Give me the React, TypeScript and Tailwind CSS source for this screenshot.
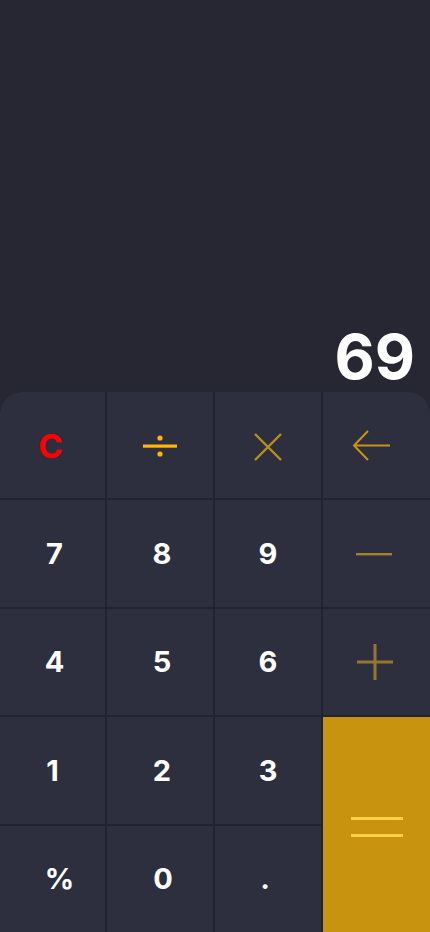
import React from "react";

const Cell = ({ children, className = "" }: { children?: React.ReactNode; className?: string }) => (
  <div className={`flex items-center justify-center bg-[#2e2f3e] ${className}`}>{children}</div>
);

const Digit = ({ d, className = "" }: { d: string; className?: string }) => (
  <Cell className={className}>
    <span className="text-[29px] font-bold text-white">{d}</span>
  </Cell>
);

export default function App() {
  return (
    <div
      className="flex h-[932px] w-[430px] flex-col bg-[#272734]"
      style={{ fontFamily: "Inter, 'Liberation Sans', sans-serif" }}
    >
      <div className="flex flex-1 items-end justify-end px-[15px] pb-[4px]">
        <span className="text-[62px] font-bold leading-none text-white">69</span>
      </div>
      <div className="grid h-[540px] grid-cols-[105px_106px_106px_1fr] grid-rows-5 gap-[2px] overflow-hidden rounded-t-[22px] bg-[#232330]">
        <Cell className="pr-[4px] pt-[4px]">
          <span className="text-[33px] font-bold text-[#ff0000]">C</span>
        </Cell>
        <Cell className="pt-[2px]">
          <svg width="36" height="30" viewBox="0 0 36 30">
            <circle cx="18" cy="7" r="2.6" fill="#ffb60a" />
            <rect x="1" y="13.5" width="34" height="3.2" fill="#ffb60a" />
            <circle cx="18" cy="23" r="2.6" fill="#ffb60a" />
          </svg>
        </Cell>
        <Cell className="pt-[4px]">
          <svg width="30" height="30" viewBox="0 0 30 30">
            <path d="M2 2 L28 28 M28 2 L2 28" stroke="#b88f1e" strokeWidth="2.4" />
          </svg>
        </Cell>
        <Cell className="pr-[10px] pt-[2px]">
          <svg width="40" height="34" viewBox="0 0 40 34">
            <path d="M38 16.5 H2 M16 2 L2 16.5 L16 31" stroke="#c89412" strokeWidth="2" fill="none" />
          </svg>
        </Cell>
        <Digit d="7" className="pl-[4px]" />
        <Digit d="8" className="pl-[4px]" />
        <Digit d="9" />
        <Cell className="pr-[6px]">
          <svg width="36" height="10" viewBox="0 0 36 10">
            <rect x="0" y="4" width="36" height="2.4" fill="#a2802e" />
          </svg>
        </Cell>
        <Digit d="4" className="pl-[4px]" />
        <Digit d="5" className="pl-[4px]" />
        <Digit d="6" />
        <Cell className="pr-[4px]">
          <svg width="36" height="36" viewBox="0 0 36 36">
            <rect x="0" y="16.5" width="36" height="3" fill="#957631" />
            <rect x="16.5" y="0" width="3" height="36" fill="#957631" />
          </svg>
        </Cell>
        <Digit d="1" />
        <Digit d="2" className="pl-[4px]" />
        <Digit d="3" />
        <div className="row-span-2 flex items-center justify-center bg-[#c8940f] pt-[2px]">
          <svg width="52" height="24" viewBox="0 0 52 24">
            <rect x="0" y="3" width="52" height="3" fill="#ffcf45" />
            <rect x="0" y="20" width="52" height="3" fill="#ffcf45" />
          </svg>
        </div>
        <Digit d="%" className="pl-[14px]" />
        <Digit d="0" className="pl-[6px]" />
        <Digit d="." className="pr-[6px]" />
      </div>
    </div>
  );
}
